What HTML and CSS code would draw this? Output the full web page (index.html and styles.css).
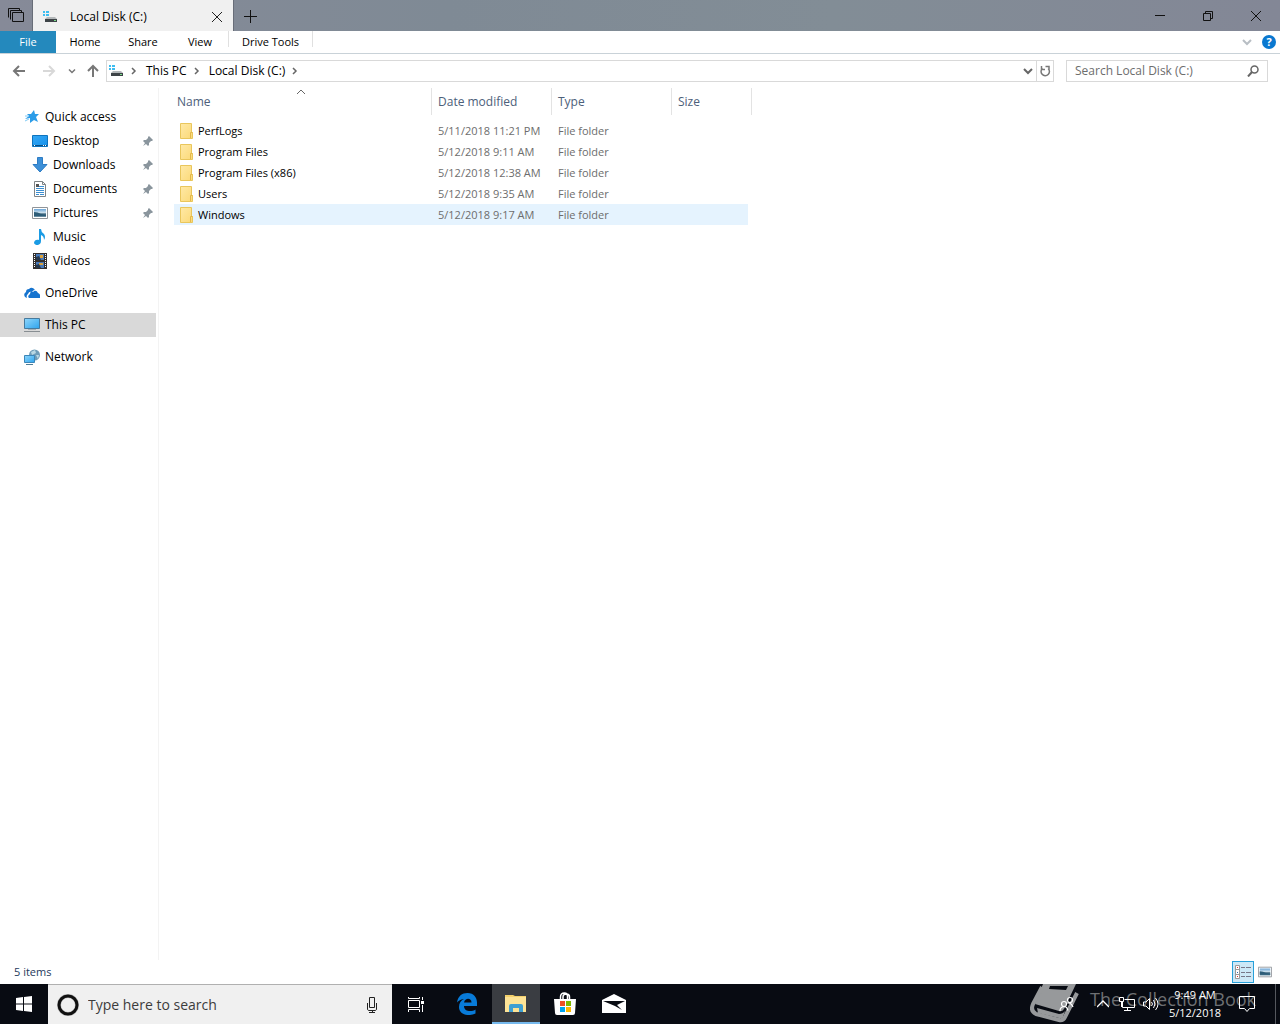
FILE: index.html
```html
<!DOCTYPE html>
<html lang="en">
<head>
<meta charset="utf-8">
<title>Local Disk (C:)</title>
<link rel="stylesheet" href="styles.css">
</head>
<body>
<svg class="defs" aria-hidden="true">
  <defs>
    <linearGradient id="sky" x1="0" y1="0" x2="1" y2="1"><stop offset="0" stop-color="#35a8f5"/><stop offset="1" stop-color="#1791ea"/></linearGradient>
    <linearGradient id="screen" x1="0" y1="0" x2="1" y2="1"><stop offset="0" stop-color="#8fd6fb"/><stop offset="1" stop-color="#2ea4ee"/></linearGradient>
    <linearGradient id="photo" x1="0" y1="0" x2="0" y2="1"><stop offset="0" stop-color="#6aa5d8"/><stop offset=".5" stop-color="#d5e6ee"/><stop offset=".6" stop-color="#365f78"/><stop offset="1" stop-color="#6f93a6"/></linearGradient>
    <linearGradient id="paper" x1="0" y1="0" x2="1" y2="1"><stop offset="0" stop-color="#ffe9a6"/><stop offset="1" stop-color="#fbd978"/></linearGradient>
  </defs>
  <symbol id="drive" viewBox="0 0 16 16">
    <path fill="#3dbdf0" d="M1 2h2v2H1zM4 2h3v2H4zM1 5h2v2H1zM4 5h3v2H4z"/>
    <path fill="#b4b8ba" d="M5 8h8l2 2H3z"/><path fill="#3d4347" d="M3 10h12v3H3z"/><path fill="#7be08a" d="M12 11h2v1h-2z"/>
  </symbol>
  <symbol id="pin" viewBox="0 0 12 12">
    <path fill="#8a959d" d="M7 1l4 4-1 1-1 0-2 2 0 2-1 1-2-2-3 2 2-3-2-2 1-1 2 0 2-2 0-1z"/>
  </symbol>
  <symbol id="picture" viewBox="0 0 16 16">
    <path fill="#fff" stroke="#8f9499" d="M.5 2.500h15v11H.5z"/><path fill="url(#photo)" d="M2 4h12v8H2z"/>
    <path fill="#2d5d78" d="M2 7q4 0 7 2l5 1v1H2z"/>
  </symbol>
  <symbol id="folder" viewBox="0 0 14 16">
    <path fill="url(#paper)" stroke="#e9c65c" d="M.5.5h11v9h1v6H.5z"/><path fill="none" stroke="#e3b94b" d="M10.500 15v-5.500h2"/>
  </symbol>
  <symbol id="chevron" viewBox="0 0 10 10"><path fill="none" stroke="currentColor" stroke-width="1.500" d="M3 2l3 3-3 3"/></symbol>
  <symbol id="down" viewBox="0 0 10 10"><path fill="none" stroke="currentColor" stroke-width="2" d="M1 3l4 4 4-4"/></symbol>
</svg>

<header class="titlebar">
  <button class="sets" aria-label="Tabs"><svg width="16" height="16" viewBox="0 0 16 16"><path fill="none" stroke="#111" d="M4.500 4.500h11v9h-11zM2.500 11.500v-9h11v2M.5 9.500v-9h11v2"/></svg></button>
  <div class="tab">
    <svg width="16" height="16"><use href="#drive"/></svg>
    <span class="tab-title">Local Disk (C:)</span>
    <button class="tab-close" aria-label="Close tab"><svg width="12" height="12" viewBox="0 0 12 12"><path stroke="#222" d="M1 1l10 10M11 1L1 11"/></svg></button>
  </div>
  <button class="new-tab" aria-label="New tab"><svg width="14" height="14" viewBox="0 0 14 14"><path stroke="#111" d="M0 7.500h13M6.500 1v13"/></svg></button>
  <div class="window-buttons">
    <button aria-label="Minimize"><svg width="12" height="12" viewBox="0 0 12 12"><path stroke="#111" d="M1 5.500h10"/></svg></button>
    <button aria-label="Restore"><svg width="12" height="12" viewBox="0 0 12 12"><path fill="none" stroke="#111" d="M1.500 3.500h7v7h-7zM3.500 3V1.500h7v7H9"/></svg></button>
    <button aria-label="Close"><svg width="12" height="12" viewBox="0 0 12 12"><path stroke="#111" d="M1 1l10 10M11 1L1 11"/></svg></button>
  </div>
</header>

<nav class="ribbon" aria-label="Ribbon">
  <button class="file">File</button>
  <button class="r-tab">Home</button>
  <button class="r-tab">Share</button>
  <button class="r-tab r-view">View</button>
  <span class="divider"></span>
  <button class="r-tools">Drive Tools</button>
  <span class="divider"></span>
  <div class="ribbon-end">
    <button aria-label="Expand ribbon"><svg class="faint" width="10" height="10"><use href="#down"/></svg></button>
    <button aria-label="Help" class="help">?</button>
  </div>
</nav>

<div class="address-row">
  <button aria-label="Back" class="nav-btn"><svg width="14" height="12" viewBox="0 0 14 12"><path fill="none" stroke="#777" stroke-width="2" d="M13 6H2M7 1L2 6l5 5"/></svg></button>
  <button aria-label="Forward" class="nav-btn"><svg width="14" height="12" viewBox="0 0 14 12"><path fill="none" stroke="#d8d8d8" stroke-width="2" d="M1 6h11M7 1l5 5-5 5"/></svg></button>
  <button aria-label="Recent locations" class="recent"><svg width="8" height="8"  viewBox="0 0 8 8"><path fill="none" stroke="#777" stroke-width="1.500" d="M1 2.500l3 3 3-3"/></svg></button>
  <button aria-label="Up" class="up"><svg width="14" height="14" viewBox="0 0 14 14"><path fill="none" stroke="#777" stroke-width="2" d="M7 13V2M2 7l5-5 5 5"/></svg></button>
  <div class="address">
    <svg width="16" height="16"><use href="#drive"/></svg>
    <svg class="crumb-sep" width="10" height="10"><use href="#chevron"/></svg>
    <a href="#">This PC</a>
    <svg class="crumb-sep" width="10" height="10"><use href="#chevron"/></svg>
    <a href="#">Local Disk (C:)</a>
    <svg class="crumb-sep" width="10" height="10"><use href="#chevron"/></svg>
    <button class="history" aria-label="Previous locations"><svg width="10" height="10"><use href="#down"/></svg></button>
    <button class="refresh" aria-label="Refresh"><svg width="12" height="12" viewBox="0 0 12 12"><path fill="none" stroke="#777" stroke-width="1.500" d="M9.200 3.500A4.200 4.200 0 1 1 3.500 3.300M2.500 1v3.500H6M6.500 1.500h3.500v3"/></svg></button>
  </div>
  <label class="search">
    <input type="text" placeholder="Search Local Disk (C:)" aria-label="Search Local Disk (C:)">
    <svg width="12" height="12" viewBox="0 0 12 12"><circle cx="7.500" cy="4.500" r="3.500" fill="none" stroke="#666" stroke-width="1.500"/><path stroke="#666" stroke-width="2" d="M5 7l-4 4.500"/></svg>
  </label>
</div>

<main class="explorer">
  <nav class="tree" aria-label="Folders">
    <a href="#"><svg width="16" height="16" viewBox="0 0 16 16"><path fill="#2b9ce8" d="M10 1l1 4 4 0-3 3 2 5-4-2-4 3 0-5-5 1 4-3-2-2 4 0z"/><path stroke="#80caf5" d="M1 7h3M1 12l4-2"/></svg>Quick access</a>
    <a href="#" class="sub"><svg width="16" height="16" viewBox="0 0 16 16"><path fill="url(#sky)" stroke="#0e74be" d="M.5 2.500h15v11H.5z"/><path stroke="#0b4f82" d="M1 12.500h14"/><path stroke="#fff" d="M2 12.500h1m8 0h1m1 0h1"/></svg>Desktop<svg class="pin" width="12" height="12"><use href="#pin"/></svg></a>
    <a href="#" class="sub"><svg width="16" height="16" viewBox="0 0 16 16"><path fill="#3d90d8" stroke="#2d7cc4" d="M5.500.5h5v7h4.500L8 15 1 7.500h4.500z"/></svg>Downloads<svg class="pin" width="12" height="12"><use href="#pin"/></svg></a>
    <a href="#" class="sub"><svg width="16" height="16" viewBox="0 0 16 16"><path fill="#fff" stroke="#7f8487" d="M2.500.5h8l3 3v12h-11z"/><path fill="none" stroke="#7f8487" d="M10.500.5v3h3"/><path stroke="#3d8fd1" d="M7 5.500h5M4 7.500h8M4 9.500h8M4 11.500h8M4 13.500h3m1 0h4"/><path fill="#555" d="M4 3h3v3H4z"/></svg>Documents<svg class="pin" width="12" height="12"><use href="#pin"/></svg></a>
    <a href="#" class="sub"><svg width="16" height="16"><use href="#picture"/></svg>Pictures<svg class="pin" width="12" height="12"><use href="#pin"/></svg></a>
    <a href="#" class="sub"><svg width="16" height="16" viewBox="0 0 16 16"><path fill="#1a9be4" d="M7 0h2q0 3 3 5 2 3 0 6 0-4-3-5v6c0 5-6 5-7 2 0-3 3-4 5-3z"/></svg>Music</a>
    <a href="#" class="sub"><svg width="16" height="16" viewBox="0 0 16 16"><path fill="#33302e" d="M1 0h14v16H1z"/><path stroke="#fff" stroke-dasharray="1 1" d="M2.500 1v14M13.500 1v14"/><path fill="#4879b8" d="M4 1h8v6H4zM4 9h8v6H4z"/><path fill="#d9a13d" d="M8 2h3v3H8zM7 10h4v2H7z"/><path fill="#26384d" d="M4 4l3-1 2 4H4zM4 12l3-1 2 4H4z"/></svg>Videos</a>
    <a href="#" class="root"><svg width="16" height="16" viewBox="0 0 16 16"><path fill="#1674cf" d="M1 12q-2-3 1-5 0-3 3-3 3-3 6 1-2 0-3 2-3-1-4 2-2 1-1 4z"/><path fill="#1674cf" d="M5 13q-2-2 1-4 0-3 3-2 3-3 5 1 3 1 2 5z"/></svg>OneDrive</a>
    <a href="#" class="root current"><svg width="16" height="16" viewBox="0 0 16 16"><path fill="url(#screen)" stroke="#477a9d" d="M.5 1.500h15v10H.5z"/><path stroke="#a7b0b6" d="M4 12.500h8"/><path stroke="#888e92" d="M0 14.500h16"/></svg>This PC</a>
    <a href="#" class="root"><svg width="16" height="16" viewBox="0 0 16 16"><circle cx="10.500" cy="6" r="5.500" fill="#6f9cb8"/><path fill="#b9d8e4" d="M7 3l4-2 1 3-4 2zM12 6l3 0-1 4z"/><path fill="url(#screen)" stroke="#3b86b9" d="M.5 6.500h10v7H.5z"/><path stroke="#4e7c96" d="M2 15.500h7"/></svg>Network</a>
  </nav>
  <section class="files">
    <table>
      <thead><tr>
        <th class="c-name" scope="col">Name<svg class="sort" width="10" height="6" viewBox="0 0 10 6"><path fill="none" stroke="#666" d="M1 5l4-4 4 4"/></svg></th>
        <th class="c-date" scope="col">Date modified</th><th class="c-type" scope="col">Type</th><th class="c-size" scope="col">Size</th>
      </tr></thead>
      <tbody>
        <tr><td><a href="#"><svg width="14" height="16"><use href="#folder"/></svg>PerfLogs</a></td><td>5/11/2018 11:21 PM</td><td>File folder</td><td></td></tr>
        <tr><td><a href="#"><svg width="14" height="16"><use href="#folder"/></svg>Program Files</a></td><td>5/12/2018 9:11 AM</td><td>File folder</td><td></td></tr>
        <tr><td><a href="#"><svg width="14" height="16"><use href="#folder"/></svg>Program Files (x86)</a></td><td>5/12/2018 12:38 AM</td><td>File folder</td><td></td></tr>
        <tr><td><a href="#"><svg width="14" height="16"><use href="#folder"/></svg>Users</a></td><td>5/12/2018 9:35 AM</td><td>File folder</td><td></td></tr>
        <tr class="hover"><td><a href="#"><svg width="14" height="16"><use href="#folder"/></svg>Windows</a></td><td>5/12/2018 9:17 AM</td><td>File folder</td><td></td></tr>
      </tbody>
    </table>
  </section>
</main>

<div class="status">
  <span>5 items</span>
  <div class="views">
    <button class="on" aria-label="Details view"><svg width="16" height="14" viewBox="0 0 16 14"><path fill="#fff" stroke="#999" d="M.5.5h4v13h-4zM.5 4.500h4M.5 9.500h4"/><path stroke="#d33" d="M2 2.500h1"/><path stroke="#36a" d="M2 7.500h1"/><path stroke="#d33" d="M2 11.500h1"/><path stroke="#778" d="M6 2.500h4m1 0h5M6 7.500h4m1 0h5M6 11.500h4m1 0h5"/></svg></button>
    <button aria-label="Large icons view"><svg width="14" height="14"><use href="#picture"/></svg></button>
  </div>
</div>

<footer class="taskbar">
  <div class="watermark">
    <svg width="50" height="40" viewBox="0 0 50 40">
      <path fill="#97999b" d="M13 0h33l-12 25q-2 3-5 2L5 20z"/>
      <path fill="#080b12" d="M20 2h18l-2 4-17-1z"/>
      <path fill="none" stroke="#97999b" stroke-width="4" stroke-linejoin="round" d="M12 3L3 20q-3 7 3 10l23 6q4 1 6-3L47 9"/>
      <path fill="#97999b" d="M7 24l22 6q4 0 6-3l-2 6q-2 2-4 1L8 29z"/>
    </svg>
    <span>The Collection Book</span>
  </div>
  <button class="start" aria-label="Start"><svg width="16" height="16" viewBox="0 0 16 16"><path fill="#fff" d="M0 2l7-1v6.500H0zM8 1l8-1v7.500H8zM0 8.500h7V15l-7-1zM8 8.500h8V16l-8-1z"/></svg></button>
  <label class="cortana">
    <svg width="22" height="22" viewBox="0 0 22 22"><circle cx="11" cy="11" r="9" fill="none" stroke="#b5b5b5" stroke-width="4"/><circle cx="11" cy="11" r="9" fill="none" stroke="#111" stroke-width="3"/></svg>
    <input type="text" placeholder="Type here to search" aria-label="Type here to search">
    <svg width="12" height="18" viewBox="0 0 12 18"><path fill="none" stroke="#222" d="M3.500 1.500h5v10h-5zM1.500 7v6q0 1 1 1.500h7q1-.5 1-1.500V7M6.500 14v3M3 16.500h6"/></svg>
  </label>
  <button class="task" aria-label="Task view"><svg width="16" height="16" viewBox="0 0 16 16"><path fill="none" stroke="#fff" d="M.5 4.500h11v7H.5zM.5 1v1.500h11V1M.5 16v-2.500h11V16M14.500 1v3m0 5v7"/><path fill="#fff" d="M13 5h3v3h-3z"/></svg></button>
  <div class="apps">
    <button class="task" aria-label="Edge"><svg width="22" height="22" viewBox="0 0 22 22"><path fill="#087bd8" d="M1 9.500C2 3 6 0 11.500 0 18 0 21 5 21 9.500V13H8c0 6 8 6 11.500 3.500v4C12 24 3 21.500 3 14c0-4 2-6.500 5-8C4 6.500 2 8 1 9.500zM8 9.500h7.500c0-5-6.500-5-7.500 0z"/></svg></button>
    <button class="task active" aria-label="File Explorer"><svg width="22" height="20" viewBox="0 0 22 20"><path fill="#f3d06b" d="M0 2h8l2 1h11v5H0z"/><path fill="#fde396" d="M0 4h21v15H0z"/><path fill="#3f9fd2" d="M4 19v-6q0-2 2-2h10q2 0 2 2v6h-4v-4H8v4z"/></svg></button>
    <button class="task" aria-label="Store"><svg width="24" height="24" viewBox="0 0 24 24"><path fill="none" stroke="#fff" stroke-width="1.500" d="M7.500 7V5q0-4 4-4 3 0 3 3v3M10 7V5q0-3 3.500-3 3 0 3 3v2"/><path fill="#fff" d="M1 7h22l-1 14q0 2-2 2H4q-2 0-2-2z"/><path fill="#ee5025" d="M7 9h5v5H7z"/><path fill="#7fba00" d="M13 9h5v5h-5z"/><path fill="#00a4ef" d="M7 15h5v5H7z"/><path fill="#ffb900" d="M13 15h5v5h-5z"/></svg></button>
    <button class="task" aria-label="Mail"><svg width="24" height="20" viewBox="0 0 24 20"><path fill="#fff" d="M0 6l12-6 12 6v13H0z"/><path fill="#080b12" d="M1 7h22l-8 4 5 5-7-4z"/></svg></button>
  </div>
  <div class="tray">
    <button class="people" aria-label="People"><svg width="16" height="16" viewBox="0 0 16 16"><g fill="none" stroke="#fff" stroke-width="1.200"><circle cx="11" cy="4" r="2.500"/><circle cx="5" cy="8" r="2.500"/><path d="M1 15q0-4 4-4.500 3 0 4 4M8 7q4-1 6 4"/></g></svg></button>
    <button class="more" aria-label="Show hidden icons"><svg width="12" height="8" viewBox="0 0 12 8"><path fill="none" stroke="#fff" stroke-width="1.300" d="M0 7l6-6 6 6"/></svg></button>
    <button aria-label="Network"><svg width="16" height="16" viewBox="0 0 16 16"><path fill="none" stroke="#fff" d="M5.500 3.500h10v8H3.500V6M8.500 11.500v3M5 14.500h7M.5 1.500h4v4h-4zM2.500 6v5"/></svg></button>
    <button aria-label="Volume"><svg width="16" height="14" viewBox="0 0 16 14"><path fill="none" stroke="#fff" d="M.5 5v4H3l3.500 3.500V1.500L3 5zM8.500 5q2 2 0 4M10.500 3q3 4 0 8M12.500 1q5 6 0 12"/></svg></button>
    <button class="clock"><span>9:49 AM</span><span>5/12/2018</span></button>
    <button class="notes" aria-label="Notifications"><svg width="16" height="16" viewBox="0 0 16 16"><path fill="none" stroke="#fff" d="M.5.5h15v12h-5l-2.500 3-2.500-3h-5z"/></svg></button>
    <button class="peek" aria-label="Show desktop"></button>
  </div>
</footer>
</body>
</html>
```
FILE: styles.css
```css
* { box-sizing: border-box; }
body {
  margin: 0;
  min-height: 100vh;
  display: flex;
  flex-direction: column;
  background: #fff;
  color: #000;
  font: 12px/16px "Open Sans", "Noto Sans", sans-serif;
}
button, input { font: inherit; color: inherit; background: none; border: 0; padding: 0; margin: 0; }
button { display: flex; align-items: center; justify-content: center; }
a { color: inherit; text-decoration: none; }
svg { flex: none; }
.defs { position: absolute; width: 0; height: 0; }

.titlebar {
  display: flex;
  height: 31px;
  background: linear-gradient(90deg, #868a98, #7f8a95 35%, #828d96 65%, #838796);
}
.sets { width: 33px; border-right: 1px solid #686d78; }
.tab { display: flex; align-items: center; width: 200px; padding: 2px 10px 0 9px; background: #f0f0f0; }
.tab-title { flex: 1; margin-left: 12px; }
.new-tab { width: 35px; border-left: 1px solid #686d78; }
.window-buttons { display: flex; margin-left: auto; }
.window-buttons button { width: 48px; }

.ribbon { display: flex; height: 23px; border-bottom: 1px solid #c9d2d8; font-size: 11px; }
.file { width: 56px; background: #2489bd; color: #fff; }
.r-tab { width: 58px; }
.r-view { width: 56px; }
.r-tools { width: 83px; }
.divider { width: 1px; height: 16px; background: #e0e0e0; }
.ribbon-end { display: flex; align-items: center; gap: 10px; margin-left: auto; padding-right: 4px; }
.faint { color: #b8bec4; }
.help { width: 14px; height: 14px; border-radius: 50%; background: #0a78d0; color: #fff; font-weight: 700; }

.address-row { display: flex; align-items: center; height: 34px; padding: 0 12px; }
.nav-btn { width: 30px; }
.nav-btn:first-child { width: 14px; margin-right: 8px; }
.recent { width: 16px; }
.up { width: 26px; }
.address, .search { display: flex; align-items: center; height: 22px; border: 1px solid #d9d9d9; }
.address { flex: 1; padding-left: 1px; }
.crumb-sep { margin: 0 7px 0 5px; color: #666; }
.history { width: 16px; margin-left: auto; color: #666; }
.refresh { width: 17px; height: 20px; border-left: 1px solid #d9d9d9; }
.search { width: 202px; margin-left: 12px; padding: 0 8px; }
.search input { flex: 1; min-width: 0; }
.search input::placeholder { color: #6d6d6d; opacity: 1; }

.explorer { display: flex; flex: 1; }
.tree { width: 159px; padding: 17px 2px 0 0; border-right: 1px solid #f3f3f3; }
.tree a { display: flex; align-items: center; gap: 5px; height: 24px; padding-left: 24px; }
.tree .sub { padding: 0 2px 0 32px; }
.pin { margin-left: auto; }
.tree .root { margin-top: 8px; }
.tree .current { background: #d9d9d9; }

.files { padding-left: 15px; }
table { width: 578px; table-layout: fixed; border-collapse: separate; border-spacing: 0; }
th { position: relative; height: 27px; padding: 0 3px; border-right: 1px solid #e3e3e3; color: #4c607a; font-weight: 400; text-align: left; }
th + th { padding-left: 6px; }
.c-name { width: 258px; }
.c-date, .c-type { width: 120px; }
.c-size { width: 80px; }
.sort { position: absolute; top: 1px; left: 122px; }
tbody { font-size: 11px; }
tbody::before { content: ""; display: block; height: 5px; }
td { height: 21px; padding: 0 0 0 6px; color: #6d6d6d; }
td a { display: flex; align-items: center; gap: 4px; color: #000; }
.hover td { background: #e5f3fe; }
td:last-child { padding: 0 4px 0 0; }
.hover td:last-child { background: linear-gradient(#e5f3fe, #e5f3fe) no-repeat 0 0 / 76px 100%; }

.status { display: flex; align-items: center; justify-content: space-between; height: 24px; padding: 0 8px 0 14px; color: #1e395b; font-size: 11px; }
.views { display: flex; gap: 4px; }
.views button { height: 22px; }
.views .on { width: 22px; background: #cce8f7; border: 1px solid #26a0da; }

.taskbar { position: relative; display: flex; height: 40px; background: #080b12; color: #fff; }
.start { width: 48px; }
.cortana { display: flex; align-items: center; width: 344px; padding: 0 14px 0 9px; gap: 9px; background: #f0f0f0; border-top: 1px solid #b0b0b0; font-size: 14px; line-height: 20px; }
.cortana input { flex: 1; min-width: 0; }
.cortana input::placeholder { color: #3c3c3c; opacity: 1; }
.task { width: 48px; height: 40px; }
.apps { display: flex; gap: 1px; margin-left: 3px; }
.active { background: #3a3d42; border-bottom: 2px solid #76b9ed; }
.watermark { position: absolute; top: 0; right: 24px; display: flex; gap: 10px; height: 40px; color: #6e7073; font-size: 18px; line-height: 30px; white-space: nowrap; }
.tray { position: relative; display: flex; margin-left: auto; }
.tray button { width: 24px; }
.tray .people { width: 48px; }
.tray .clock { flex-direction: column; width: 64px; font-size: 11px; line-height: 18px; }
.tray .notes { width: 40px; }
.tray .peek { width: 5px; border-left: 1px solid #55585e; margin-left: 8px; }
```
